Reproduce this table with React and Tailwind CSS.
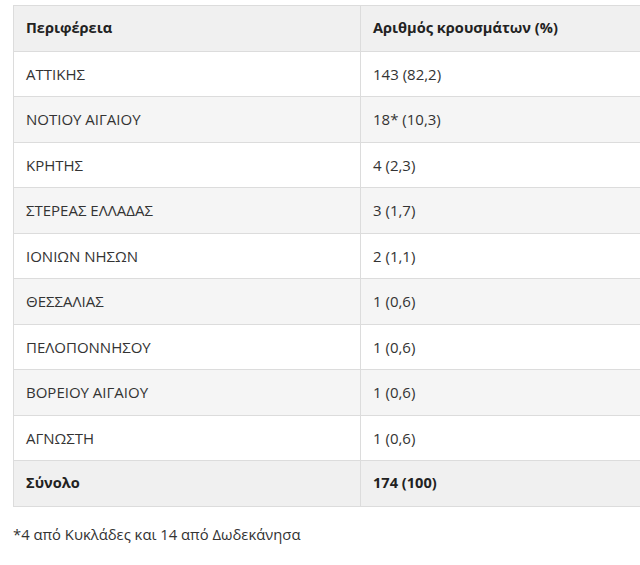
import React from 'react'

const rows = [
    ['ΑΤΤΙΚΗΣ', '143 (82,2)'],
    ['ΝΟΤΙΟΥ ΑΙΓΑΙΟΥ', '18* (10,3)'],
    ['ΚΡΗΤΗΣ', '4 (2,3)'],
    ['ΣΤΕΡΕΑΣ ΕΛΛΑΔΑΣ', '3 (1,7)'],
    ['ΙΟΝΙΩΝ ΝΗΣΩΝ', '2 (1,1)'],
    ['ΘΕΣΣΑΛΙΑΣ', '1 (0,6)'],
    ['ΠΕΛΟΠΟΝΝΗΣΟΥ', '1 (0,6)'],
    ['ΒΟΡΕΙΟΥ ΑΙΓΑΙΟΥ', '1 (0,6)'],
    ['ΑΓΝΩΣΤΗ', '1 (0,6)'],
]

const App = () => {
    return (
        <div className="w-[640px] h-[565px] overflow-hidden bg-white pl-[13px] pt-[5px] font-['Open_Sans',sans-serif] text-[15px] text-[#333]">
            <table className="w-[700px] border-collapse">
                <thead>
                    <tr className="bg-[#f0f0f0] h-[45.5px] text-[14.6px]">
                        <th className="w-[347px] border border-[#dcdcdc] px-3 text-left font-bold text-[#222]">Περιφέρεια</th>
                        <th className="border border-[#dcdcdc] px-3 text-left font-bold text-[#222]">Αριθμός κρουσμάτων (%)</th>
                    </tr>
                </thead>
                <tbody>
                    {rows.map(([region, count], i) => (
                        <tr key={region} className={i % 2 === 1 ? 'bg-[#f5f5f5] h-[45.5px]' : 'bg-white h-[45.5px]'}>
                            <td className="border border-[#dcdcdc] px-3">{region}</td>
                            <td className="border border-[#dcdcdc] px-3">{count}</td>
                        </tr>
                    ))}
                    <tr className="bg-[#f0f0f0] h-[45.5px] text-[14.6px]">
                        <td className="border border-[#dcdcdc] px-3 font-bold text-[#222]">Σύνολο</td>
                        <td className="border border-[#dcdcdc] px-3 font-bold text-[#222]">174 (100)</td>
                    </tr>
                </tbody>
            </table>
            <p className="mt-[16px] text-[14.8px] text-[#333]">*4 από Κυκλάδες και 14 από Δωδεκάνησα</p>
        </div>
    )
}

export default App
